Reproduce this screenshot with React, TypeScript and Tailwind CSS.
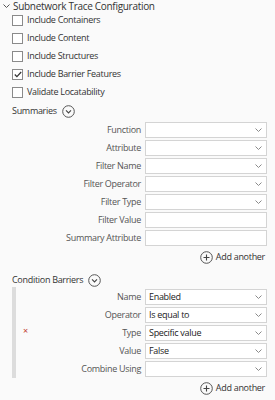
import React from 'react';

const font = { fontFamily: '"Open Sans", "Noto Sans", sans-serif', letterSpacing: '-0.3px' };

const Chevron = ({ color = '#777' }: { color?: string }) => (
  <svg width="7" height="4" viewBox="0 0 7 4">
    <path d="M0.5 0.5 L3.5 3.5 L6.5 0.5" fill="none" stroke={color} strokeWidth="1" />
  </svg>
);

const CircleChevron = () => (
  <svg width="13" height="13" viewBox="0 0 13 13">
    <circle cx="6.5" cy="6.5" r="5.8" fill="none" stroke="#555" strokeWidth="1" />
    <path d="M4 5.4 L6.5 7.9 L9 5.4" fill="none" stroke="#444" strokeWidth="1.1" />
  </svg>
);

const CirclePlus = () => (
  <svg width="13" height="13" viewBox="0 0 13 13">
    <circle cx="6.5" cy="6.5" r="5.8" fill="none" stroke="#555" strokeWidth="1" />
    <path d="M6.5 3.5 V9.5 M3.5 6.5 H9.5" fill="none" stroke="#444" strokeWidth="1.1" />
  </svg>
);

const Checkbox = ({ label, checked }: { label: string; checked?: boolean }) => (
  <div className="flex items-center h-[18px] pl-[12px]">
    <div className="w-[11px] h-[11px] border border-[#8a8a8a] bg-white flex items-center justify-center">
      {checked && (
        <svg width="8" height="7" viewBox="0 0 8 7">
          <path d="M0.8 3.5 L2.9 5.7 L7.2 1" fill="none" stroke="#333" strokeWidth="1.2" />
        </svg>
      )}
    </div>
    <span className="ml-[4px] text-[9px] text-[#333]">{label}</span>
  </div>
);

const Field = ({
  label,
  value,
  dropdown = true,
}: {
  label: string;
  value?: string;
  dropdown?: boolean;
}) => (
  <div className="flex items-center h-[18px]">
    <span className="flex-1 text-right text-[9px] text-[#555] pr-[4px] whitespace-nowrap">{label}</span>
    <div className="w-[122px] h-[16px] border border-[#d4d4d4] bg-white flex items-center pl-[3px] pr-[4px] mr-[8px]">
      <span className="flex-1 text-[9px] text-[#222]">{value}</span>
      {dropdown && <Chevron color="#8a8a8a" />}
    </div>
  </div>
);

const AddAnother = () => (
  <div className="flex items-center justify-end gap-[3px] pr-[10px] h-[20px]">
    <CirclePlus />
    <span className="text-[9px] text-[#333]">Add another</span>
  </div>
);

export default function App() {
  return (
    <div className="w-[275px] h-[400px] bg-[#fafafa] overflow-hidden" style={font}>
      <div className="flex items-center h-[12px] pl-[3px] gap-[3px]">
        <Chevron color="#555" />
        <span className="text-[10px] leading-[12px] text-[#333]">Subnetwork Trace Configuration</span>
      </div>
      <div className="-mt-[1px]">
        <Checkbox label="Include Containers" />
        <Checkbox label="Include Content" />
        <Checkbox label="Include Structures" />
        <Checkbox label="Include Barrier Features" checked />
        <Checkbox label="Validate Locatability" />
      </div>

      <div className="flex items-center h-[20px] pl-[12px] gap-[5px]">
        <span className="text-[9px] text-[#333]">Summaries</span>
        <CircleChevron />
      </div>
      <div>
        <Field label="Function" />
        <Field label="Attribute" />
        <Field label="Filter Name" />
        <Field label="Filter Operator" />
        <Field label="Filter Type" />
        <Field label="Filter Value" dropdown={false} />
        <Field label="Summary Attribute" dropdown={false} />
      </div>
      <AddAnother />

      <div className="flex items-center h-[14px] pl-[12px] gap-[5px] mt-[6px]">
        <span className="text-[9px] text-[#333]">Condition Barriers</span>
        <CircleChevron />
      </div>
      <div className="flex pl-[12px]">
        <div className="w-[4px] bg-[#dcdcdc]" />
        <div className="flex-1 pt-[1px] relative">
          <span className="absolute left-[7px] top-[39px] text-[9px] text-[#c0392b] leading-none">×</span>
          <Field label="Name" value="Enabled" />
          <Field label="Operator" value="Is equal to" />
          <Field label="Type" value="Specific value" />
          <Field label="Value" value="False" />
          <Field label="Combine Using" />
        </div>
      </div>
      <AddAnother />
    </div>
  );
}
